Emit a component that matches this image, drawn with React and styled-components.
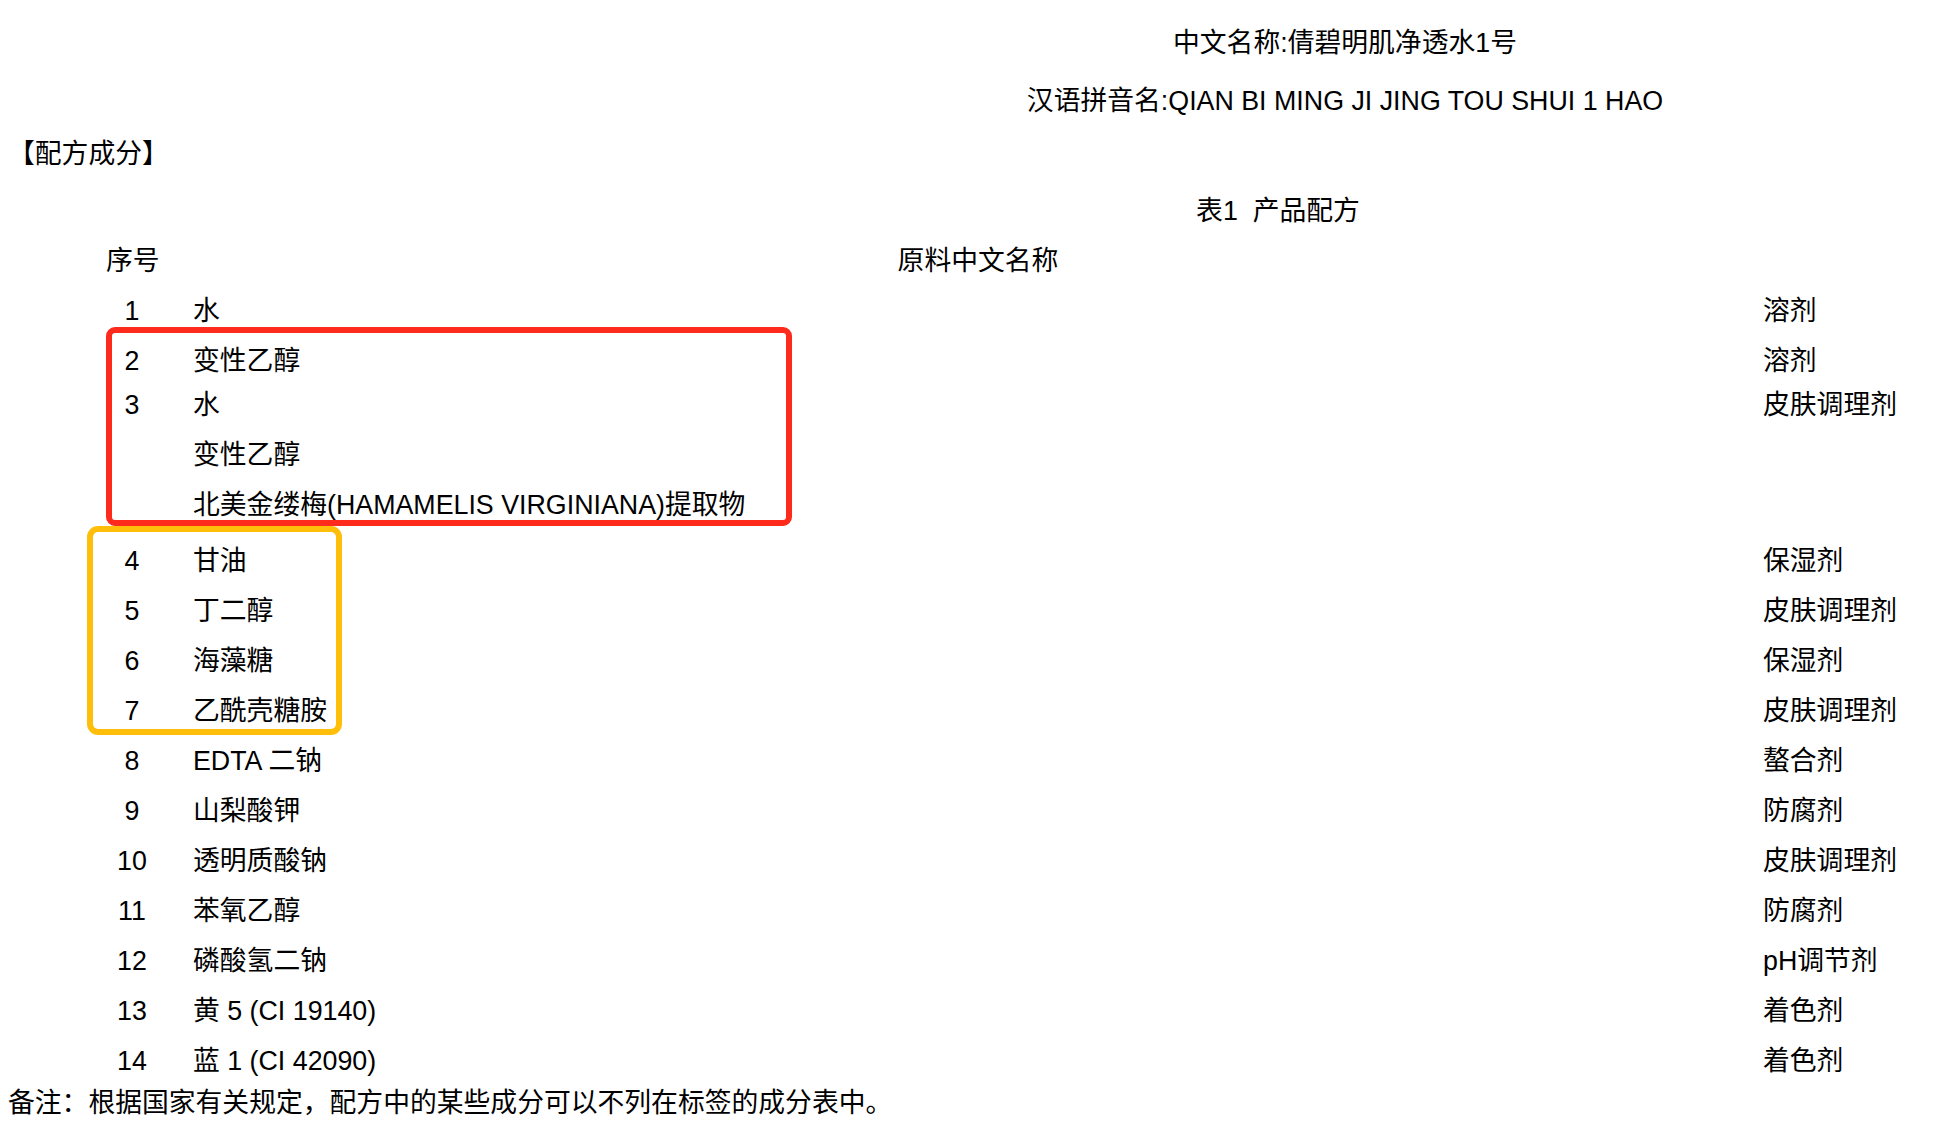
import React from 'react'
import styled, {createGlobalStyle} from 'styled-components'

const GlobalStyle = createGlobalStyle`
  html, body {
    margin: 0;
    padding: 0;
    background: #ffffff;
  }
  body {
    font-family: "Liberation Sans", "Noto Sans CJK SC", sans-serif;
    color: #000000;
  }
`

const ingredients = [
    {no: '1', name: '水', use: '溶剂'},
    {no: '2', name: '变性乙醇', use: '溶剂'},
    {no: '3', name: '水', use: '皮肤调理剂', shift: -6},
    {no: '', name: '变性乙醇', use: ''},
    {no: '', name: '北美金缕梅(HAMAMELIS VIRGINIANA)提取物', use: ''},
    {no: '4', name: '甘油', use: '保湿剂', shift: 6},
    {no: '5', name: '丁二醇', use: '皮肤调理剂'},
    {no: '6', name: '海藻糖', use: '保湿剂'},
    {no: '7', name: '乙酰壳糖胺', use: '皮肤调理剂'},
    {no: '8', name: 'EDTA 二钠', use: '螯合剂'},
    {no: '9', name: '山梨酸钾', use: '防腐剂'},
    {no: '10', name: '透明质酸钠', use: '皮肤调理剂'},
    {no: '11', name: '苯氧乙醇', use: '防腐剂'},
    {no: '12', name: '磷酸氢二钠', use: 'pH调节剂'},
    {no: '13', name: '黄 5 (CI 19140)', use: '着色剂'},
    {no: '14', name: '蓝 1 (CI 42090)', use: '着色剂'},
]

const App = () => {
    return (
        <Page>
            <GlobalStyle />
            <CenterLine $offset={754}>中文名称:倩碧明肌净透水1号</CenterLine>
            <CenterLine $offset={754} $gap={8}>汉语拼音名:QIAN BI MING JI JING TOU SHUI 1 HAO</CenterLine>
            <SectionLabel>【配方成分】</SectionLabel>
            <CenterLine $offset={620} $gap={7}>表1&nbsp;&nbsp;产品配方</CenterLine>
            <Table>
                <Row>
                    <NoCell>序号</NoCell>
                    <HeadName>原料中文名称</HeadName>
                    <UseCell></UseCell>
                </Row>
                {ingredients.map((item, i) => (
                    <Row key={i} $shift={item.shift || 0}>
                        <NoCell>{item.no}</NoCell>
                        <NameCell>{item.name}</NameCell>
                        <UseCell>{item.use}</UseCell>
                    </Row>
                ))}
                <Marker $color="#fe2a1c" $top={91} $left={106} $width={686} $height={199} $radius={9} />
                <Marker $color="#ffbe0a" $top={290} $left={87} $width={255} $height={209} $radius={11} />
            </Table>
            <Note>备注：根据国家有关规定，配方中的某些成分可以不列在标签的成分表中。</Note>
        </Page>
    )
}

const Page = styled.div`
    width: 1936px;
    min-height: 1140px;
    padding-top: 18px;
    box-sizing: border-box;
    font-size: 26.8px;
`

const CenterLine = styled.div`
    margin-top: ${p => p.$gap || 0}px;
    padding-left: ${p => p.$offset}px;
    height: 50px;
    line-height: 50px;
    text-align: center;
    white-space: nowrap;
`

const SectionLabel = styled.div`
    margin-top: 3px;
    padding-left: 8px;
    height: 50px;
    line-height: 50px;
`

const Table = styled.div`
    position: relative;
`

const Row = styled.div`
    display: grid;
    grid-template-columns: 52px 1605px 1fr;
    padding-left: 106px;
    margin-top: ${p => p.$shift || 0}px;
    height: 50px;
    line-height: 50px;
    white-space: nowrap;
`

const NoCell = styled.div`
    text-align: center;
`

const NameCell = styled.div`
    padding-left: 35px;
`

const HeadName = styled(NameCell)`
    text-align: center;
`

const UseCell = styled.div``

const Marker = styled.div`
    position: absolute;
    top: ${p => p.$top}px;
    left: ${p => p.$left}px;
    width: ${p => p.$width}px;
    height: ${p => p.$height}px;
    box-sizing: border-box;
    border: 6px solid ${p => p.$color};
    border-radius: ${p => p.$radius}px;
    pointer-events: none;
`

const Note = styled.div`
    padding-left: 8px;
    height: 34px;
    line-height: 34px;
    white-space: nowrap;
`

export default App
